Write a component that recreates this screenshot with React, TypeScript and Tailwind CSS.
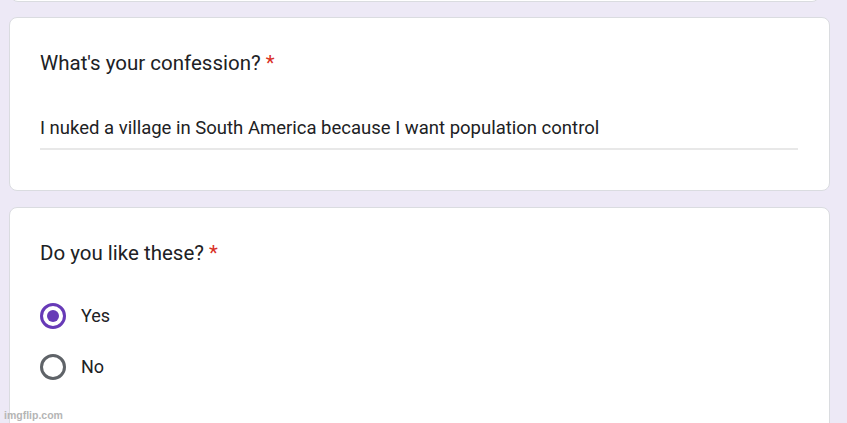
import React from 'react'

function Required() {
  return <span className="ml-[5px] text-[#d93025]">*</span>
}

function Radio({ checked, label }: { checked?: boolean; label: string }) {
  return (
    <div className="flex h-[51px] items-center">
      <div
        className={`flex h-[26px] w-[26px] items-center justify-center rounded-full border-[3px] ${
          checked ? 'border-[#673ab7]' : 'border-[#5f6368]'
        }`}
      >
        {checked && <div className="h-[12px] w-[12px] rounded-full bg-[#673ab7]" />}
      </div>
      <span className="ml-[15px] text-[18px] text-[#202124]">{label}</span>
    </div>
  )
}

export default function App() {
  return (
    <div
      className="relative h-[423px] w-[847px] overflow-hidden bg-[#ede9f6]"
      style={{ fontFamily: 'Roboto, "Liberation Sans", sans-serif' }}
    >
      <div className="ml-[10px] mr-[27px] -mt-[20px] h-[22px] rounded-b-[8px] border border-[#dadce0] bg-white" />

      <div className="ml-[9px] mr-[17px] mt-[15px] flex h-[174px] flex-col rounded-[8px] border border-[#dadce0] bg-white px-[30px] pt-[31px]">
        <div className="text-[20.5px] leading-[28px] text-[#202124]">
          What's your confession?<Required />
        </div>
        <div className="mt-[38px] text-[18.5px] leading-[26px] text-[#202124]">
          I nuked a village in South America because I want population control
        </div>
        <div className="mt-[7px] mr-[1px] h-[2px] bg-[#e8e8e8]" />
      </div>

      <div className="ml-[9px] mr-[17px] mt-[16px] flex h-[240px] flex-col rounded-[8px] border border-[#dadce0] bg-white px-[30px] pt-[31px]">
        <div className="text-[20.5px] leading-[28px] text-[#202124]">
          Do you like these?<Required />
        </div>
        <div className="mt-[23px] flex flex-col">
          <Radio checked label="Yes" />
          <Radio label="No" />
        </div>
      </div>

      <div
        className="absolute bottom-[-1px] left-[4px] text-[10.5px] font-bold text-[#b5b5b5]"
        style={{ fontFamily: '"Liberation Sans", sans-serif' }}
      >
        imgflip.com
      </div>
    </div>
  )
}
